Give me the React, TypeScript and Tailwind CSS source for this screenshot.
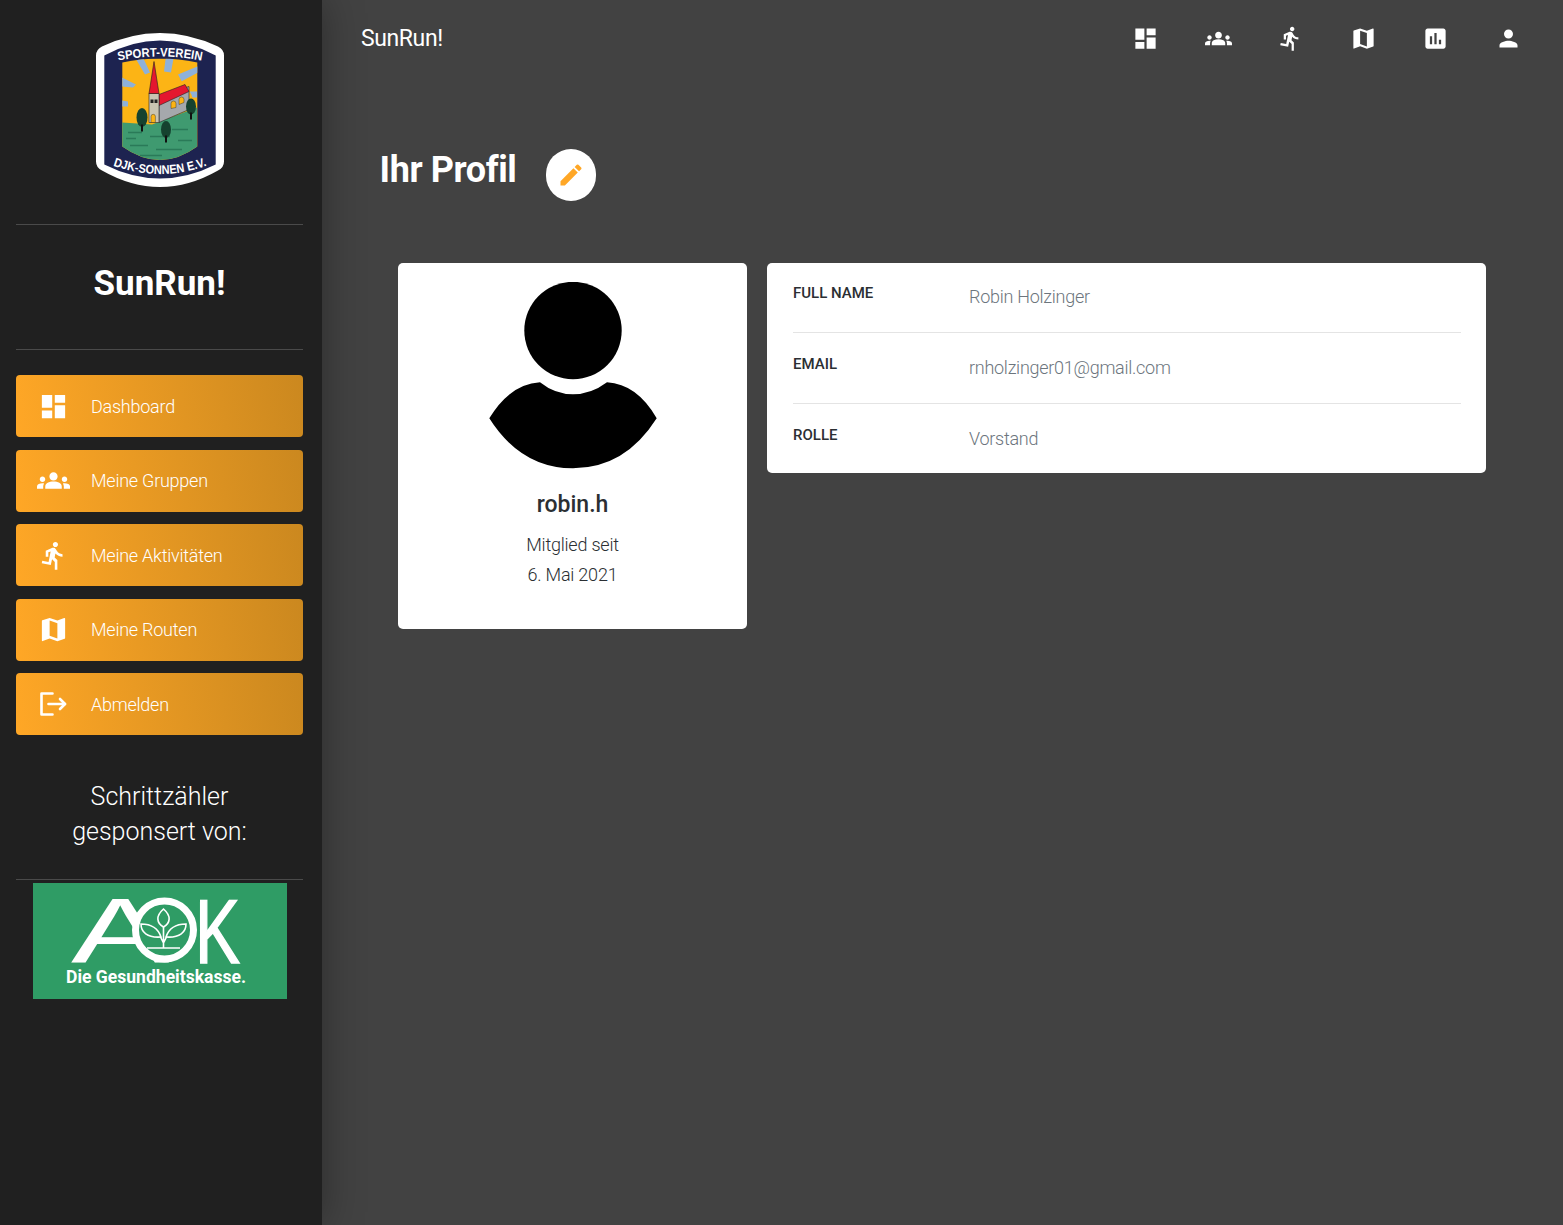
import type { ReactNode } from "react";
import { MdAssessment, MdDashboard, MdDirectionsRun, MdEdit, MdGroups, MdMap, MdPerson } from "react-icons/md";

function LogoutIcon() {
  return (
    <svg width="27" height="24" viewBox="0 0 27 24" fill="none" stroke="currentColor" strokeWidth="2.6" strokeLinecap="round" strokeLinejoin="round">
      <path d="M12.5 1.5H1.5v21h11" />
      <path d="M8.5 12h16.5" />
      <path d="M20 7l5 5-5 5" />
    </svg>
  );
}

function ClubCrest() {
  return (
    <svg width="128" height="156" viewBox="96 32.5 128 156">
      <defs>
        <clipPath id="scene">
          <path d="M122.3 63 Q160 55 197.3 63 V147 Q160 174 122.3 147 Z" />
        </clipPath>
        <path id="arcTop" d="M114 62 Q160 52 206 62" />
        <path id="arcBottom" d="M110 165 Q160 184 210 165" />
      </defs>
      <path d="M96 56 Q96 50 102 47 Q160 20 218 47 Q224 50 224 56 V162 Q224 168 218 171 Q160 204 102 171 Q96 168 96 162 Z" fill="#fff" />
      <path d="M104.3 56 Q160 26 215.7 56 V165 Q160 193 104.3 165 Z" fill="#1d2350" />
      <g clipPath="url(#scene)">
        <rect x="122" y="55" width="76" height="110" fill="#fcb415" />
        <path d="M135 58h8l7 15-5 2zM166 56h8l-3 17-7-1zM198 66.700V73l-16.300 8.700-3.700-6.700zM122 78v9l11 1 3-3zM122 101l6 1v5h-6zM189 92h8v6h-8z" fill="#8eb1d9" />
        <circle cx="161" cy="108" r="33" fill="#fcb415" />
        <path d="M122 123 L152 125 L197 108 V172 H122 Z" fill="#3f9a70" />
        <path d="M128 133h14M150 137h20M172 130h16M130 146h18M156 150h26M140 156h22M126 139h10M178 141h14" stroke="#2a7a58" strokeWidth="1.4" />
        <path d="M159 97 L189 87 V110 L159 123 Z" fill="#a5a8ac" stroke="#222" strokeWidth="0.6" />
        <path d="M159 95 L185 85 L189 92 L159 106 Z" fill="#e4172f" stroke="#222" strokeWidth="0.6" />
        <rect x="149" y="94" width="10" height="29" fill="#c9c4b2" stroke="#222" strokeWidth="0.6" />
        <path d="M154 62 L149 94 H159 Z" fill="#e4172f" stroke="#222" strokeWidth="0.6" />
        <path d="M151 123v-6a2.200 2.200 0 0 1 4.400 0v6z" fill="#fcb415" stroke="#222" strokeWidth="0.4" />
        <path d="M171 109v-5a2.500 2.500 0 0 1 5 0v4zM179 105v-5a2.500 2.500 0 0 1 5 0v3z" fill="#fcb415" stroke="#222" strokeWidth="0.4" />
        <rect x="150.500" y="100" width="3" height="3.500" fill="#222" />
        <rect x="154.500" y="100" width="3" height="3.500" fill="#222" />
        <ellipse cx="142" cy="118" rx="5.500" ry="9.500" fill="#15422f" />
        <rect x="141" y="125" width="2" height="7" fill="#111" />
        <ellipse cx="166" cy="130" rx="5" ry="8.500" fill="#15422f" />
        <rect x="165" y="136" width="2" height="7" fill="#111" />
        <ellipse cx="191" cy="107" rx="5" ry="8" fill="#15422f" />
        <rect x="190" y="113" width="2" height="7" fill="#111" />
      </g>
      <text fontFamily="'Liberation Sans', sans-serif" fontWeight="700" fontSize="12.5" fill="#fff">
        <textPath href="#arcTop" startOffset="50%" textAnchor="middle" textLength="84" lengthAdjust="spacingAndGlyphs">SPORT-VEREIN</textPath>
      </text>
      <text fontFamily="'Liberation Sans', sans-serif" fontWeight="700" fontSize="12.5" fill="#fff">
        <textPath href="#arcBottom" startOffset="50%" textAnchor="middle" textLength="96" lengthAdjust="spacingAndGlyphs">DJK-SONNEN E.V.</textPath>
      </text>
    </svg>
  );
}

function AokLogo() {
  return (
    <svg className="block overflow-visible" width="254" height="116" viewBox="0 0 254 116">
      <rect width="254" height="116" fill="#2f9c65" />
      <text transform="translate(38 80) scale(1.6 1)" fontFamily="'Liberation Sans', sans-serif" fontSize="92" fill="#fff">A</text>
      <circle cx="131.500" cy="47" r="29" fill="#2f9c65" stroke="#fff" strokeWidth="7" />
      <text transform="translate(162 79.500) scale(0.75 1)" fontFamily="'Liberation Sans', sans-serif" fontSize="90" fill="#fff" stroke="#fff" strokeWidth="1.5">K</text>
      <g fill="none" stroke="#fff" strokeWidth="1.600">
        <path d="M130.500 44V65M114 65h33M130.500 60l-3-6M130.500 60l3-6" />
        <path d="M130.500 44c-7-4-8-11 0-18 8 7 7 14 0 18z" />
        <path d="M128 54c-3-9-10-13-20-13 0 8 6 14 20 13z" />
        <path d="M133 54c3-9 10-13 20-13 0 8-6 14-20 13z" />
      </g>
      <text x="33" y="100" fontFamily="'Roboto', sans-serif" fontWeight="700" fontSize="18" fill="#fff" textLength="180" lengthAdjust="spacingAndGlyphs">Die Gesundheitskasse.</text>
    </svg>
  );
}

function NavButton({ icon, label }: { icon: ReactNode; label: string }) {
  return (
    <a className="flex h-[62px] items-center rounded-[4px] bg-[linear-gradient(80deg,#ffa726,#cb881f)] text-white">
      <span className="flex w-[75px] shrink-0 justify-center">{icon}</span>
      <span className="pt-[1.2px] text-[18px] font-light leading-[26px] tracking-[-0.24px]">{label}</span>
    </a>
  );
}

function InfoRow({ label, value, className }: { label: string; value: string; className: string }) {
  return (
    <div className={`grid grid-cols-[176px_1fr] pt-[21px] ${className}`}>
      <span className="text-[15px] font-medium uppercase leading-[20px] text-[#2b2f33]">{label}</span>
      <span className="pt-[1px] text-[18px] font-light leading-[26px] tracking-[-0.27px] text-[#6c757d]">{value}</span>
    </div>
  );
}

const topIcons = [MdDashboard, MdGroups, MdDirectionsRun, MdMap, MdAssessment, MdPerson];

export default function App() {
  return (
    <div className="flex min-h-[1225px] bg-[#424242] font-['Roboto',sans-serif]">
      <aside className="relative z-10 flex w-[322px] shrink-0 flex-col bg-[#202020] pl-4 pr-[19px] shadow-[0_0_38px_rgba(0,0,0,0.35)]">
        <div className="flex h-[225px] items-start justify-center border-b border-[#4a4a4a] pt-[32px]">
          <ClubCrest />
        </div>
        <div className="flex h-[125px] items-center justify-center border-b border-[#4a4a4a] pb-[6px]">
          <h2 className="text-[35px] font-bold leading-[40px] text-white">SunRun!</h2>
        </div>
        <nav className="mt-[25.4px] flex flex-col gap-[12.4px]">
          <NavButton icon={<MdDashboard size={31} />} label="Dashboard" />
          <NavButton icon={<MdGroups size={33} />} label="Meine Gruppen" />
          <NavButton icon={<MdDirectionsRun size={31} />} label="Meine Aktivitäten" />
          <NavButton icon={<MdMap size={31} />} label="Meine Routen" />
          <NavButton icon={<LogoutIcon />} label="Abmelden" />
        </nav>
        <div className="mt-[44px] flex h-[101px] flex-col items-center border-b border-[#4a4a4a] text-center text-[25px] font-light leading-[35px] text-white">
          <span>Schrittzähler</span>
          <span>gesponsert von:</span>
        </div>
        <div className="mt-[3px] flex justify-center">
          <AokLogo />
        </div>
      </aside>
      <main className="flex min-w-0 flex-1 flex-col">
        <header className="flex h-[76px] items-center justify-between pl-[39px] pr-[18.5px]">
          <span className="pt-[2px] text-[23px] font-normal leading-[30px] tracking-[-0.4px] text-white">SunRun!</span>
          <div className="flex">
            {topIcons.map((Icon, i) => (
              <span key={i} className="flex w-[72.5px] justify-center text-white">
                <Icon size={27} />
              </span>
            ))}
          </div>
        </header>
        <div className="mt-[73px] flex items-start pl-[57.5px]">
          <h1 className="pt-[1px] text-[36px] font-bold leading-[40px] tracking-[-0.4px] text-white">Ihr Profil</h1>
          <button className="ml-[30px] flex h-[52px] w-[50px] items-center justify-center rounded-full bg-white text-[#ffa726]">
            <MdEdit size={28} />
          </button>
        </div>
        <div className="mt-[62px] flex items-start gap-5 pl-[76px]">
          <section className="flex h-[366px] w-[349px] flex-col items-center rounded-[5px] bg-white pt-[19px]">
            <svg width="168" height="187" viewBox="489 282 168 187">
              <circle cx="573" cy="330.5" r="48.7" fill="#000" />
              <path d="M489.3 418.3Q510 384 540 382.3Q555 394.3 573 394.3Q591 394.3 607 382.3Q637 384 656.7 418.3Q625 468.3 573 468.3Q521 468.3 489.3 418.3Z" fill="#000" />
            </svg>
            <h4 className="mt-[21px] text-[23px] font-medium leading-[30px] text-[#2b2f33]">robin.h</h4>
            <p className="mt-[10px] text-[18px] font-light leading-[30px] tracking-[-0.22px] text-[#2b2f33]">Mitglied seit</p>
            <p className="text-[18px] font-light leading-[30px] tracking-[-0.22px] text-[#2b2f33]">6. Mai 2021</p>
          </section>
          <section className="w-[719px] overflow-hidden rounded-[5px] bg-white pl-[26px] pr-[25px]">
            <InfoRow label="Full Name" value="Robin Holzinger" className="-mt-[1px] h-[71px] border-b border-[#e4e4e4]" />
            <InfoRow label="Email" value="rnholzinger01@gmail.com" className="h-[71px] border-b border-[#e4e4e4]" />
            <InfoRow label="Rolle" value="Vorstand" className="h-[69px]" />
          </section>
        </div>
      </main>
    </div>
  );
}
